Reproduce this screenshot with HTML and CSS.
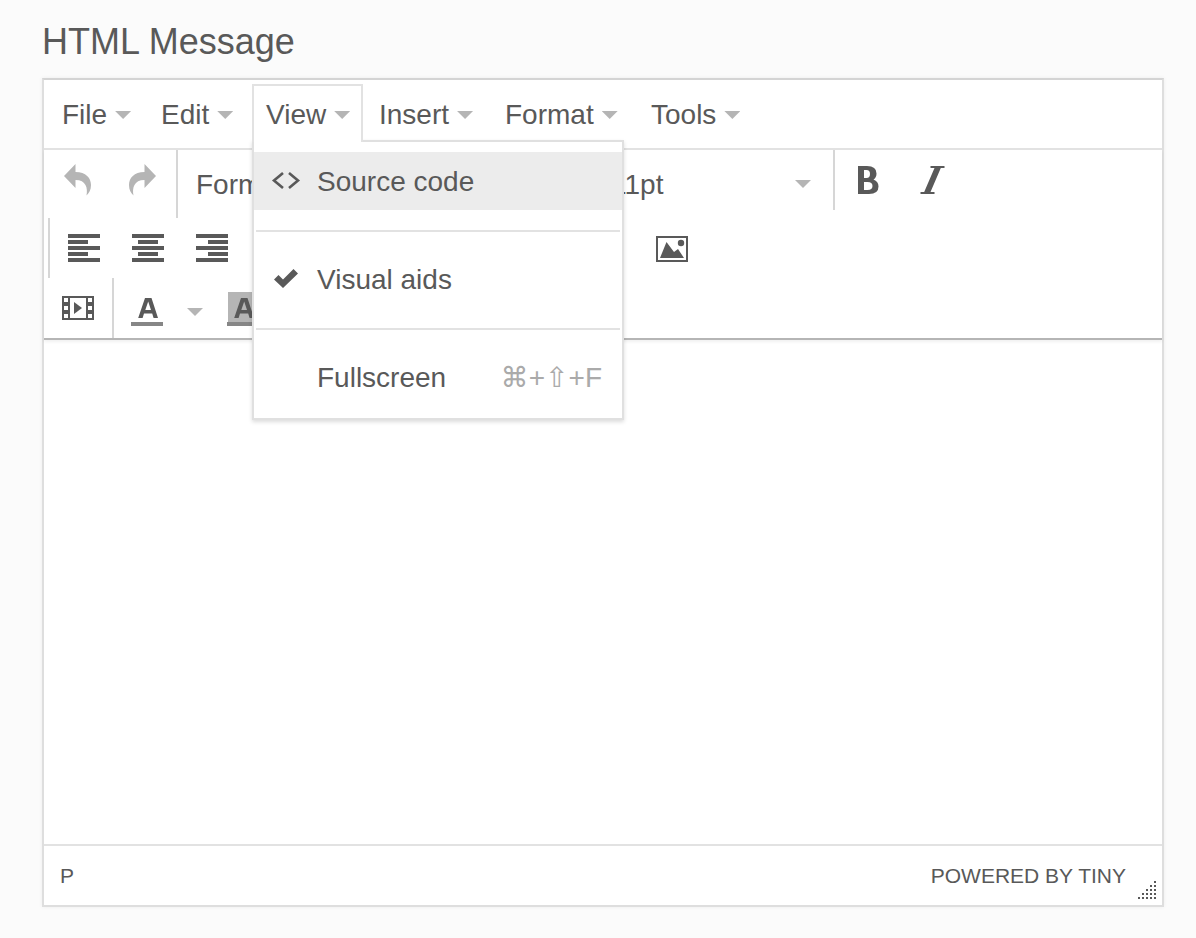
FILE: index.html
```html
<!DOCTYPE html>
<html lang="en">
<head>
<meta charset="utf-8">
<title>HTML Message</title>
<link rel="stylesheet" href="styles.css">
</head>
<body>
<main class="page">
  <h1 class="title" id="message-label">HTML Message</h1>
  <section class="editor" aria-labelledby="message-label">
    <nav class="menubar" aria-label="Editor menu">
      <button class="menu-button" type="button">File<span class="caret"></span></button>
      <button class="menu-button" type="button">Edit<span class="caret"></span></button>
      <div class="menu-anchor">
        <button class="menu-button is-open" type="button" aria-expanded="true">View<span class="caret"></span></button>
        <div class="menu" role="menu">
          <button class="menu-item is-active" type="button" role="menuitem">
            <svg class="menu-icon" viewBox="0 0 32 32" aria-hidden="true"><path d="M13 7 4 14.500 13 22M19 7 28 14.500 19 22" fill="none" stroke="#595959" stroke-width="2.600"/></svg>
            <span>Source code</span>
          </button>
          <hr class="menu-rule">
          <button class="menu-item" type="button" role="menuitemcheckbox" aria-checked="true">
            <svg class="menu-icon" viewBox="0 0 32 32" aria-hidden="true"><path d="M4 15.500 8.500 11 13 15.500 23.500 5 28 9.500 13 24Z" fill="#595959"/></svg>
            <span>Visual aids</span>
          </button>
          <hr class="menu-rule">
          <button class="menu-item" type="button" role="menuitem">
            <span class="menu-icon"></span>
            <span>Fullscreen</span>
            <span class="shortcut">⌘+⇧+F</span>
          </button>
        </div>
      </div>
      <button class="menu-button" type="button">Insert<span class="caret"></span></button>
      <button class="menu-button" type="button">Format<span class="caret"></span></button>
      <button class="menu-button" type="button">Tools<span class="caret"></span></button>
    </nav>

    <div class="toolbar" role="toolbar" aria-label="Formatting">
      <div class="row">
        <div class="group">
          <button class="tool" type="button" aria-label="Undo"><svg width="32" height="32" viewBox="0 0 32 32"><path d="M2 12 13.500 0V8C24 8 29 14 29 21C29 26 27 29 24.500 31.500C26 24 24 16 13.500 16V24Z" fill="#b5b5b5"/></svg></button>
          <button class="tool" type="button" aria-label="Redo"><svg width="32" height="32" viewBox="0 0 32 32"><path d="M30 12 18.500 0V8C8 8 3 14 3 21C3 26 5 29 7.500 31.500C6 24 8 16 18.500 16V24Z" fill="#b5b5b5"/></svg></button>
        </div>
        <div class="group group-lists">
          <select class="list" aria-label="Formats"><option>Formats</option></select>
          <div class="list-box">
            <select class="list" aria-label="Font size"><option>11pt</option></select>
            <span class="caret"></span>
          </div>
        </div>
        <div class="group group-split">
          <button class="tool" type="button" aria-label="Bold"><svg width="32" height="32" viewBox="0 0 32 32"><path fill-rule="evenodd" d="M7 2H16Q25.500 2 25.500 9.500Q25.500 13.500 22.500 15.500Q27.500 17.500 27.500 22.500Q27.500 30 18 30H7ZM13 6V14H15.500Q19 14 19 10Q19 6 15.500 6ZM13 18V26H16.500Q21.500 26 21.500 22Q21.500 18 16.500 18Z" fill="#595959"/></svg></button>
          <button class="tool" type="button" aria-label="Italic"><svg width="32" height="32" viewBox="0 0 32 32"><path d="M15.500 2H29.500V4H25.800L15.500 28H19.500V30H5.500V28H9.200L19.500 4H15.500Z" fill="#595959"/></svg></button>
        </div>
      </div>
      <div class="row">
        <div class="group group-align">
          <button class="tool" type="button" aria-label="Align left"><svg width="32" height="32" viewBox="0 0 32 32"><path d="M0 2H32V6H0ZM0 8H20V12H0ZM0 14H32V18H0ZM0 20H20V24H0ZM0 26H32V30H0Z" fill="#595959"/></svg></button>
          <button class="tool" type="button" aria-label="Align center"><svg width="32" height="32" viewBox="0 0 32 32"><path d="M0 2H32V6H0ZM6 8H26V12H6ZM0 14H32V18H0ZM6 20H26V24H6ZM0 26H32V30H0Z" fill="#595959"/></svg></button>
          <button class="tool" type="button" aria-label="Align right"><svg width="32" height="32" viewBox="0 0 32 32"><path d="M0 2H32V6H0ZM12 8H32V12H12ZM0 14H32V18H0ZM12 20H32V24H12ZM0 26H32V30H0Z" fill="#595959"/></svg></button>
        </div>
        <div class="group group-insert">
          <button class="tool" type="button" aria-label="Insert image"><svg width="32" height="32" viewBox="0 0 32 32"><path d="M1 5H31V29H1Z" fill="none" stroke="#595959" stroke-width="2"/><path d="M4 26 10.500 10 18 20 22 17 28 26Z" fill="#595959"/><circle cx="25" cy="11" r="3.200" fill="#595959"/></svg></button>
        </div>
      </div>
      <div class="row">
        <div class="group">
          <button class="tool" type="button" aria-label="Insert media"><svg width="32" height="32" viewBox="0 0 32 32"><path fill-rule="evenodd" d="M0 4H32V28H0ZM8 6V26H24V6ZM2 6V10H6V6ZM2 14V18H6V14ZM2 22V26H6V22ZM26 6V10H30V6ZM26 14V18H30V14ZM26 22V26H30V22Z" fill="#595959"/><path d="M12 10 20 16 12 22Z" fill="#595959"/></svg></button>
        </div>
        <div class="group group-split group-color">
          <button class="tool tool-color" type="button" aria-label="Text color"><svg width="32" height="36" viewBox="0 0 32 36"><path fill-rule="evenodd" d="M14 8H20.500L27 28H22.600L21.200 23.500H13L11.600 28H7.200ZM17.200 11.500 14.300 20H20Z" fill="#595959"/><path d="M0 32H32V36H0Z" fill="#868686"/></svg></button>
          <button class="tool tool-caret" type="button" aria-label="Text color options"><span class="caret"></span></button>
          <button class="tool tool-color" type="button" aria-label="Background color"><svg width="32" height="36" viewBox="0 0 32 36"><path d="M1 2H32V32H1Z" fill="#b5b5b5"/><path fill-rule="evenodd" d="M14 8H20.500L27 28H22.600L21.200 23.500H13L11.600 28H7.200ZM17.200 11.500 14.300 20H20Z" fill="#595959"/><path d="M0 32H32V36H0Z" fill="#868686"/></svg></button>
        </div>
      </div>
    </div>

    <div class="content" contenteditable="true" role="textbox" aria-multiline="true" aria-labelledby="message-label"></div>

    <footer class="statusbar">
      <span>P</span>
      <a class="brand" href="#">POWERED BY TINY</a>
      <svg class="grip" width="18" height="18" viewBox="0 0 18 18" aria-hidden="true"><path d="M16 0h2v2h-2zM12 4h2v2h-2zM16 4h2v2h-2zM8 8h2v2h-2zM12 8h2v2h-2zM16 8h2v2h-2zM4 12h2v2h-2zM8 12h2v2h-2zM12 12h2v2h-2zM16 12h2v2h-2zM0 16h2v2h-2zM4 16h2v2h-2zM8 16h2v2h-2zM12 16h2v2h-2zM16 16h2v2h-2z" fill="#595959"/></svg>
    </footer>
  </section>
</main>
</body>
</html>
```
FILE: styles.css
```css
* {
  box-sizing: border-box;
}

body {
  margin: 0;
  background: #fbfbfb;
  color: #595959;
  font-family: "Liberation Sans", Arial, sans-serif;
  font-size: 28px;
  line-height: 32px;
}

button,
select {
  margin: 0;
  padding: 0;
  border: 0;
  background: none;
  color: inherit;
  font: inherit;
}

.page {
  padding: 20px 32px 30px 42px;
}

.title {
  margin: 0 0 14px;
  font-size: 36px;
  font-weight: 400;
  line-height: 44px;
}

.editor {
  border: 2px solid #dedede;
  border-top-color: #d4d4d4;
  background: #fff;
  box-shadow: 0 0 4px rgba(0, 0, 0, 0.06);
}

.menubar {
  display: grid;
  grid-template-columns: 97px 103px 111px 124px 144px 118px;
  column-gap: 2px;
  padding: 4px;
  padding-bottom: 6px;
  border-bottom: 2px solid #e2e2e2;
}

.menu-button {
  display: flex;
  align-items: center;
  width: 100%;
  height: 58px;
  padding: 2px 12px 0;
  border: 2px solid transparent;
  border-bottom: 0;
  white-space: nowrap;
}

.menu-button .caret {
  margin-left: 8px;
}

.menu-button.is-open {
  position: relative;
  z-index: 3;
  border-color: #e2e2e2;
  background: #fff;
}

.caret {
  flex: none;
  width: 16px;
  height: 8px;
  background: #b5b5b5;
  clip-path: polygon(0 0, 100% 0, 50% 100%);
}

.menu-anchor {
  position: relative;
}

.menu {
  position: absolute;
  top: 56px;
  left: 0;
  z-index: 2;
  width: 372px;
  padding: 10px 0 12px;
  border: 2px solid #e0e0e0;
  background: #fff;
  box-shadow: 0 2px 4px rgba(0, 0, 0, 0.14);
}

.menu-item {
  display: flex;
  align-items: center;
  gap: 15px;
  width: 100%;
  height: 58px;
  padding: 2px 20px 0 16px;
  text-align: left;
}

.menu-item.is-active {
  background: #ececec;
}

.menu-icon {
  flex: none;
  width: 32px;
  height: 32px;
}

.menu-rule {
  height: 2px;
  margin: 20px 2px 18px;
  border: 0;
  background: #e2e2e2;
}

.shortcut {
  margin-left: auto;
  color: #aaa;
  font-family: "Liberation Sans", "DejaVu Sans", sans-serif;
}

.toolbar {
  border-bottom: 2px solid #b5b5b5;
  box-shadow: 0 2px 3px rgba(0, 0, 0, 0.06);
}

.row {
  display: flex;
  align-items: flex-start;
  padding-left: 2px;
}

.group {
  display: flex;
  align-items: center;
  height: 60px;
  padding-right: 2px;
}

.group-lists {
  width: 657px;
  height: 68px;
  padding: 0 22px 0 18px;
  border-left: 2px solid #d6d6d6;
}

.group-split {
  border-left: 2px solid #d6d6d6;
}

.group-align {
  margin-left: 2px;
  padding-left: 2px;
  border-left: 2px solid #d6d6d6;
}

.group-insert {
  margin-left: 394px;
}

.list {
  flex: 1;
  height: 60px;
  padding-top: 2px;
  appearance: none;
}

.list-box {
  display: flex;
  align-items: center;
  width: 200px;
}

.tool {
  display: flex;
  align-items: center;
  justify-content: center;
  width: 64px;
  height: 60px;
}

.group-color {
  align-items: flex-start;
}

.tool-color {
  align-items: flex-start;
  width: 66px;
  padding-top: 12px;
}

.tool-caret {
  width: 30px;
  padding-top: 8px;
}

.content {
  min-height: 504px;
  padding: 16px;
  outline: 0;
}

.statusbar {
  position: relative;
  display: flex;
  justify-content: space-between;
  padding: 14px 36px 13px 16px;
  border-top: 2px solid #e2e2e2;
  font-size: 21px;
}

.brand {
  color: inherit;
  text-decoration: none;
}

.grip {
  position: absolute;
  right: 6px;
  bottom: 6px;
}
```
